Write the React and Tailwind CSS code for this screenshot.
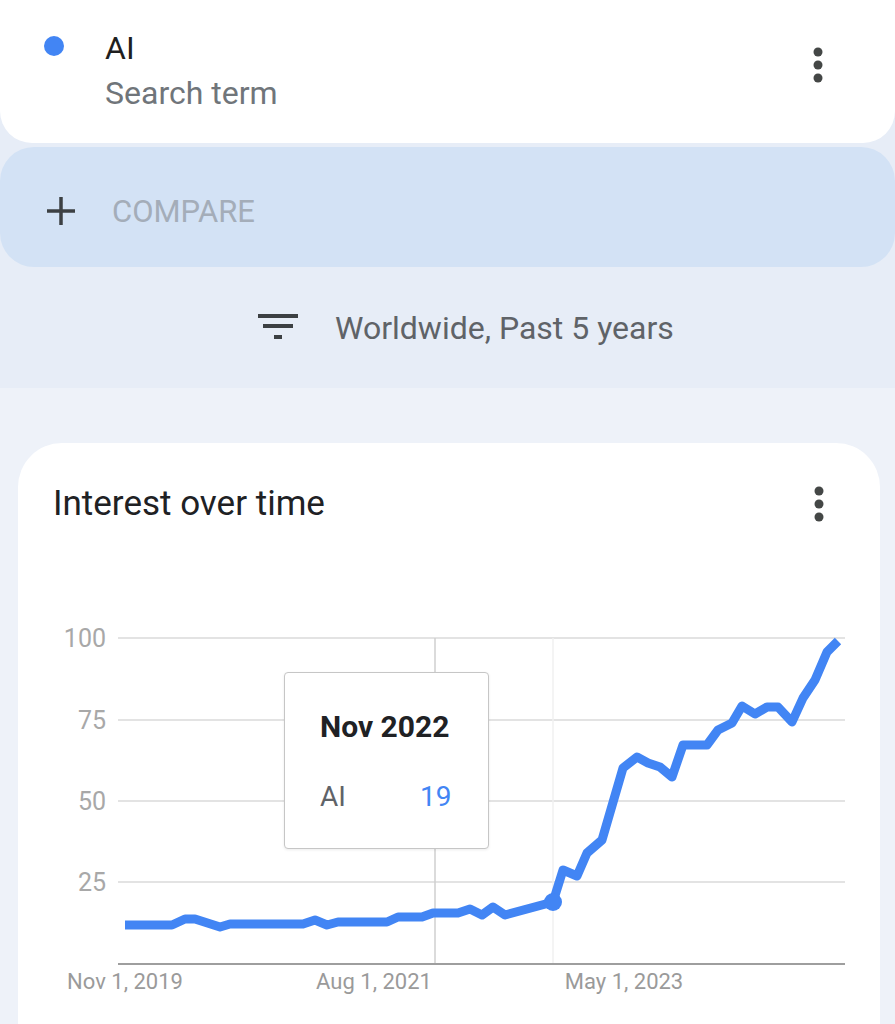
const pts = [
  [125, 925], [172, 925], [185, 919], [195, 919], [220, 927], [230, 924], [303, 924],
  [315, 920], [327, 925], [338, 922], [387, 922], [398, 917], [422, 917], [433, 913],
  [458, 913], [470, 909], [482, 915], [493, 907], [505, 915], [553, 902], [563, 870],
  [577, 876], [587, 853], [602, 840], [623, 768], [637, 757], [648, 763], [660, 767],
  [672, 777], [683, 745], [707, 745], [718, 730], [732, 723], [742, 706], [755, 714],
  [767, 707], [778, 707], [792, 722], [803, 698], [815, 680], [827, 652], [838, 641],
];

function Kebab() {
  return (
    <svg width="12" height="36" viewBox="0 0 12 36">
      <circle cx="6" cy="5" r="4.5" fill="#444746" />
      <circle cx="6" cy="18" r="4.5" fill="#444746" />
      <circle cx="6" cy="31" r="4.5" fill="#444746" />
    </svg>
  );
}

function Chart() {
  const yTicks = [
    ["100", 638],
    ["75", 720],
    ["50", 801],
    ["25", 882],
  ];
  return (
    <svg width="862" height="464" viewBox="18 560 862 464" className="block">
      {yTicks.map(([label, y]) => (
        <g key={label}>
          <line x1="118" x2="845" y1={y} y2={y} stroke="#e3e3e3" strokeWidth="2" />
          <text x="106" y={y + 9} textAnchor="end" fontSize="25" fill="#a8a8a8" fontFamily="Roboto, sans-serif">
            {label}
          </text>
        </g>
      ))}
      <line x1="435" x2="435" y1="638" y2="964" stroke="#cfcfcf" strokeWidth="1.5" />
      <line x1="553" x2="553" y1="638" y2="964" stroke="#f0f0f0" strokeWidth="1.5" />
      <line x1="118" x2="845" y1="964" y2="964" stroke="#9e9e9e" strokeWidth="2" />
      {[
        ["Nov 1, 2019", 125],
        ["Aug 1, 2021", 374],
        ["May 1, 2023", 624],
      ].map(([label, x]) => (
        <text key={label} x={x} y="989" textAnchor="middle" fontSize="22" fill="#9a9a9a" fontFamily="Roboto, sans-serif">
          {label}
        </text>
      ))}
      <polyline
        points={pts.map((p) => p.join(",")).join(" ")}
        fill="none"
        stroke="#4285f4"
        strokeWidth="9"
        strokeLinejoin="round"
        strokeLinecap="butt"
      />
      <circle cx="553" cy="902" r="9" fill="#4285f4" />
    </svg>
  );
}

export default function App() {
  return (
    <div className="h-[1024px] w-[895px] overflow-hidden bg-[#eef2f9] font-['Roboto',sans-serif]">
      <div className="bg-[#e7edf7]">
        <div className="relative h-[143px] rounded-b-[32px] bg-white pt-[32px] pl-[105px]">
          <div className="absolute left-[44px] top-[36px] h-[20px] w-[20px] rounded-full bg-[#4285f4]" />
          <div className="text-[32px] leading-[32px] text-[#1f1f1f]">AI</div>
          <div className="mt-[13px] text-[32px] leading-[32px] text-[#70757a]">Search term</div>
          <div className="absolute right-[71px] top-[47px]">
            <Kebab />
          </div>
        </div>
        <div className="mt-[4px] flex h-[120px] items-center gap-[35px] rounded-[34px] bg-[#d3e2f5] pt-[8px] pl-[45px]">
          <svg width="32" height="32" viewBox="0 0 32 32">
            <path d="M16 2v28M2 16h28" stroke="#3c4043" strokeWidth="3.5" />
          </svg>
          <span className="text-[31px] leading-none text-[#a4adb9]">COMPARE</span>
        </div>
        <div className="flex h-[121px] items-center gap-[37px] pl-[258px]">
          <svg width="40" height="28" viewBox="0 0 40 28">
            <rect x="0" y="0" width="40" height="4" fill="#3c4043" />
            <rect x="5" y="10" width="30" height="4" fill="#3c4043" />
            <rect x="16" y="21" width="8" height="4" fill="#3c4043" />
          </svg>
          <span className="text-[32px] leading-none text-[#5f6368]">Worldwide, Past 5 years</span>
        </div>
      </div>
      <div className="pt-[55px] pl-[18px]">
        <div className="relative h-[581px] w-[862px] rounded-t-[44px] bg-white">
          <div className="flex h-[117px] items-start justify-between pt-[44px] pl-[35px] pr-[55px]">
            <span className="text-[35px] leading-[34px] text-[#202124]">Interest over time</span>
            <div className="-mt-[1px]">
              <Kebab />
            </div>
          </div>
          <Chart />
          <div className="absolute left-[266px] top-[229px] h-[177px] w-[205px] rounded-[4px] border-[1.5px] border-[#c6c6c6] bg-white pt-[39px] pl-[35px] shadow-[0_1px_3px_rgba(0,0,0,0.08)]">
            <div className="text-[30px] font-bold leading-[30px] text-[#202124]">Nov 2022</div>
            <div className="mt-[41px] flex text-[28px] leading-[28px]">
              <span className="w-[100px] text-[#5f6368]">AI</span>
              <span className="text-[#4285f4]">19</span>
            </div>
          </div>
        </div>
      </div>
    </div>
  );
}
